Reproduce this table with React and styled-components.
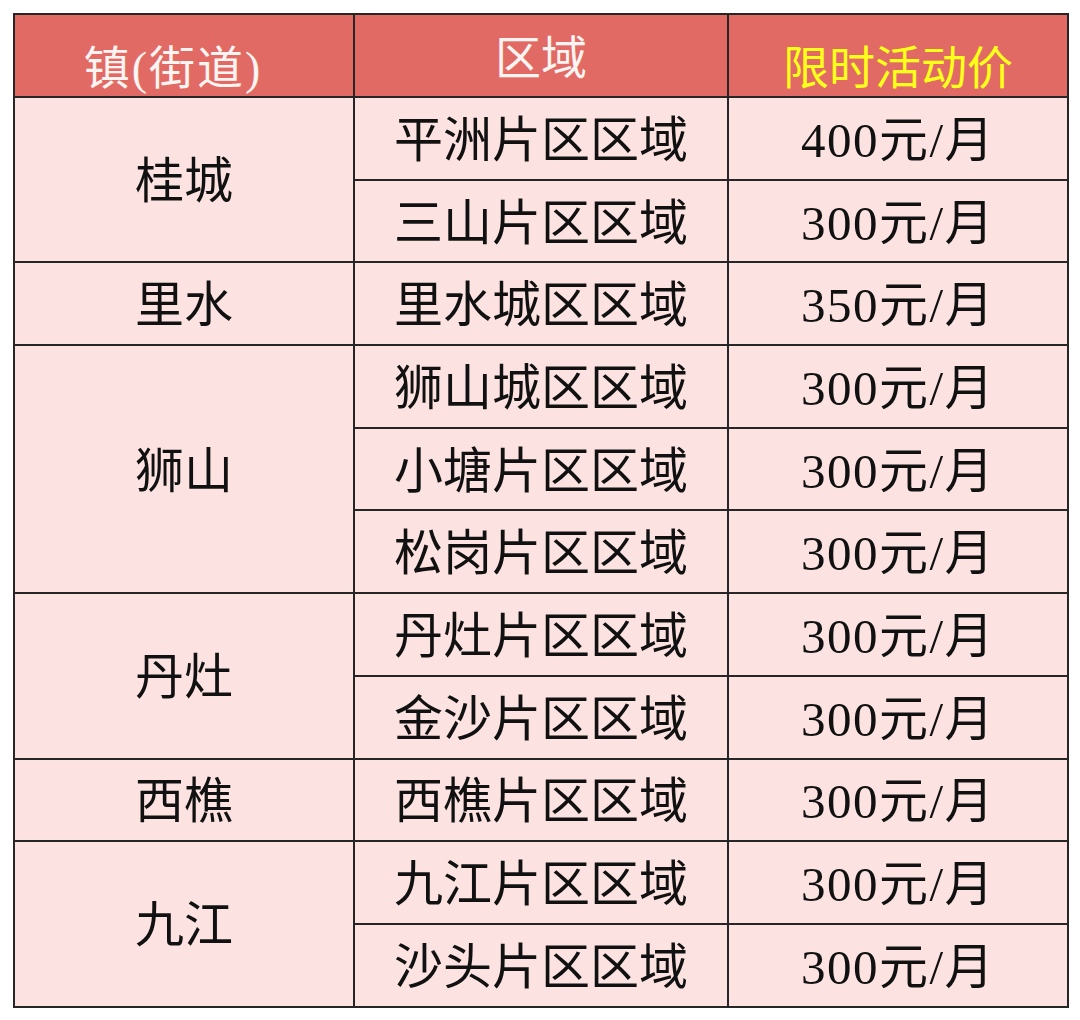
import React from 'react';
import styled, { createGlobalStyle } from 'styled-components';

const GlobalStyle = createGlobalStyle`
  html, body {
    margin: 0;
    padding: 0;
    background: #ffffff;
  }
  body {
    font-family: "Liberation Serif", "Noto Sans CJK SC", serif;
  }
`;

const Page = styled.div`
  padding: 13px 0 0 13px;
`;

const Table = styled.table`
  border-collapse: collapse;
  table-layout: fixed;
  width: 1054px;
  border: 2px solid #262626;
`;

// header glyphs sit low in the cell, except the middle one
const HeadCell = styled.th`
  height: ${p => (p.$raised ? '74px' : '54px')};
  padding: ${p => (p.$raised ? '7px 0 0' : '27px 0 0')};
  padding-right: ${p => (p.$shift ? '22px' : '0')};
  background: #e16b64;
  border: 2px solid #262626;
  color: ${p => (p.$highlight ? '#ffff1a' : '#fff4f2')};
  font-size: 46px;
  font-weight: 400;
  line-height: 1;
  letter-spacing: ${p => (p.$shift ? '2px' : '0')};
  text-align: center;
  vertical-align: middle;
`;

const Cell = styled.td`
  height: 76.7px;
  padding: 4px 0 0;
  background: #fce3e1;
  border: 2px solid #262626;
  color: #111111;
  font-size: 49px;
  line-height: 1;
  letter-spacing: ${p => (p.$price ? '1.5px' : '0')};
  text-align: center;
  vertical-align: middle;
`;

const towns = [
  { name: '桂城', areas: [['平洲片区区域', '400元/月'], ['三山片区区域', '300元/月']] },
  { name: '里水', areas: [['里水城区区域', '350元/月']] },
  {
    name: '狮山',
    areas: [
      ['狮山城区区域', '300元/月'],
      ['小塘片区区域', '300元/月'],
      ['松岗片区区域', '300元/月'],
    ],
  },
  { name: '丹灶', areas: [['丹灶片区区域', '300元/月'], ['金沙片区区域', '300元/月']] },
  { name: '西樵', areas: [['西樵片区区域', '300元/月']] },
  { name: '九江', areas: [['九江片区区域', '300元/月'], ['沙头片区区域', '300元/月']] },
];

export default function App() {
  return (
    <>
      <GlobalStyle />
      <Page>
        <Table>
          <colgroup>
            <col style={{ width: 340 }} />
            <col style={{ width: 374 }} />
            <col style={{ width: 340 }} />
          </colgroup>
          <thead>
            <tr>
              <HeadCell $shift>镇(街道)</HeadCell>
              <HeadCell $raised>区域</HeadCell>
              <HeadCell $highlight>限时活动价</HeadCell>
            </tr>
          </thead>
          <tbody>
            {towns.map(town =>
              town.areas.map(([area, price], i) => (
                <tr key={area}>
                  {i === 0 && <Cell rowSpan={town.areas.length}>{town.name}</Cell>}
                  <Cell>{area}</Cell>
                  <Cell $price>{price}</Cell>
                </tr>
              ))
            )}
          </tbody>
        </Table>
      </Page>
    </>
  );
}
